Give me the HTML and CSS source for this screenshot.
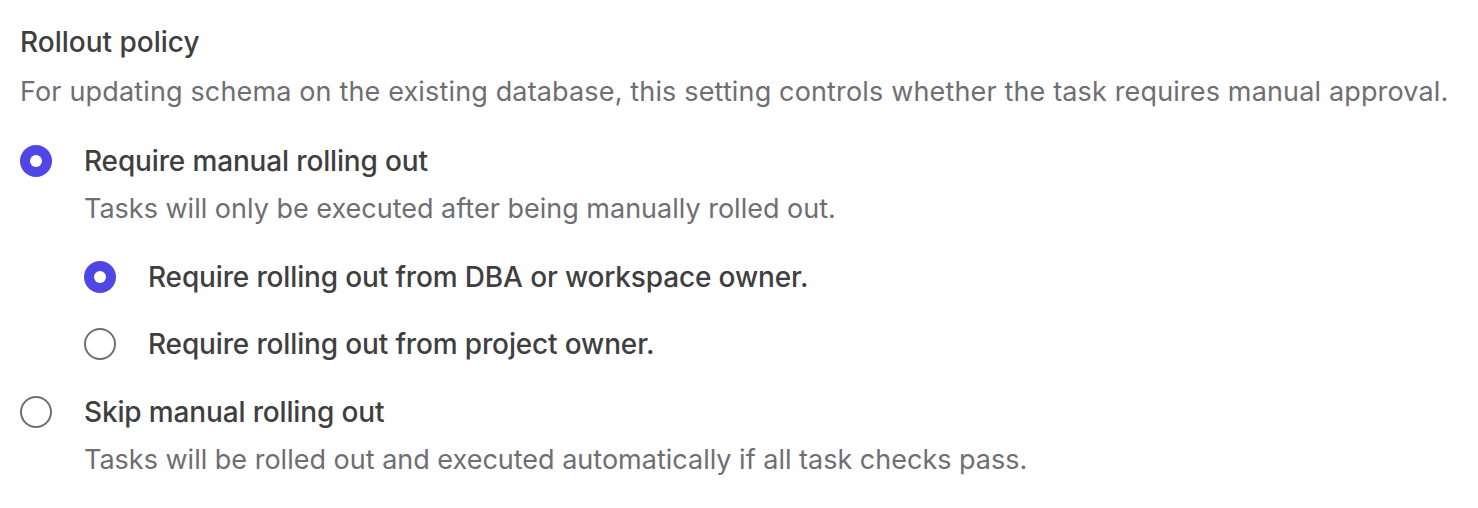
FILE: index.html
```html
<!DOCTYPE html>
<html>
<head>
<meta charset="utf-8">
<link rel="stylesheet" href="styles.css">
</head>
<body>
<div class="section">
  <div class="title">Rollout policy</div>
  <div class="subtitle">For updating schema on the existing database, this setting controls whether the task requires manual approval.</div>
  <div class="group">
    <div class="option">
      <div class="row">
        <span class="radio checked"></span>
        <span class="label">Require manual rolling out</span>
      </div>
      <div class="desc">Tasks will only be executed after being manually rolled out.</div>
      <div class="subgroup">
        <div class="row">
          <span class="radio checked"></span>
          <span class="label">Require rolling out from DBA or workspace owner.</span>
        </div>
        <div class="row">
          <span class="radio"></span>
          <span class="label">Require rolling out from project owner.</span>
        </div>
      </div>
    </div>
    <div class="option">
      <div class="row">
        <span class="radio"></span>
        <span class="label">Skip manual rolling out</span>
      </div>
      <div class="desc">Tasks will be rolled out and executed automatically if all task checks pass.</div>
    </div>
  </div>
</div>
</body>
</html>
```

FILE: styles.css
```css
* { box-sizing: border-box; }
html, body { margin: 0; padding: 0; background: #ffffff; }
body {
  font-family: Inter, "Noto Sans", "Liberation Sans", sans-serif;
  -webkit-font-smoothing: antialiased;
}
.section {
  padding: 22px 20px;
}
.title {
  font-size: 28px;
  line-height: 40px;
  font-weight: 500;
  color: #3f3f42;
}
.subtitle {
  margin-top: 10px;
  font-size: 27px;
  line-height: 40px;
  color: #6e6e73;
  white-space: nowrap;
  letter-spacing: 0.15px;
}
.group {
  margin-top: 29px;
  display: flex;
  flex-direction: column;
  gap: 28px;
}
.row {
  display: flex;
  align-items: center;
  gap: 32px;
  height: 40px;
}
.label {
  font-size: 28px;
  line-height: 40px;
  font-weight: 500;
  color: #3f3f42;
  letter-spacing: -0.15px;
}
.desc {
  margin-top: 8px;
  margin-left: 64px;
  font-size: 27px;
  line-height: 40px;
  color: #6e6e73;
}
.subgroup {
  margin-top: 28px;
  margin-left: 64px;
  display: flex;
  flex-direction: column;
  gap: 27px;
}
.radio {
  flex: none;
  width: 32px;
  height: 32px;
  border-radius: 50%;
  border: 2px solid #6e6e73;
  background: #ffffff;
  display: flex;
  align-items: center;
  justify-content: center;
}
.radio.checked {
  border: none;
  background: #4f46e5;
}
.radio.checked::after {
  content: "";
  width: 12px;
  height: 12px;
  border-radius: 50%;
  background: #ffffff;
}
```
